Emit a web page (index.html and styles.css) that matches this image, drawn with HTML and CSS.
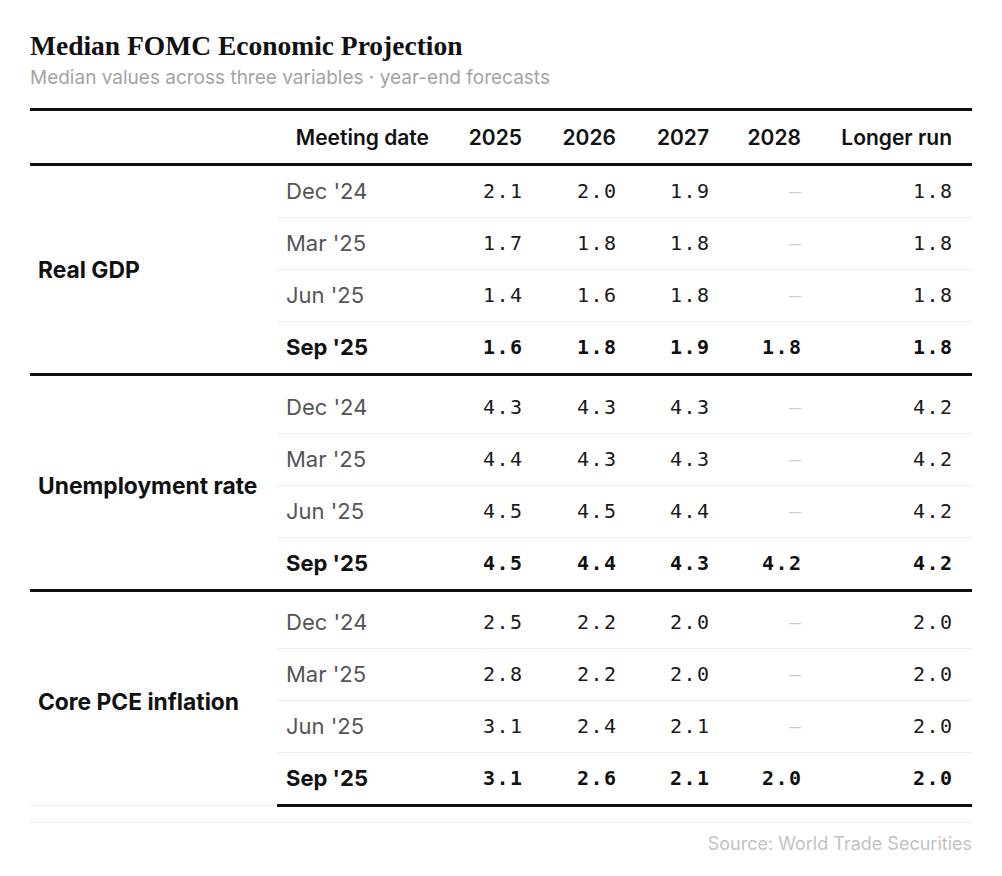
FILE: index.html
```html
<!DOCTYPE html>
<html lang="en">
<head>
<meta charset="utf-8">
<title>Median FOMC Economic Projection</title>
<link rel="stylesheet" href="styles.css">
</head>
<body>
<div class="page">
  <h1 class="title">Median FOMC Economic Projection</h1>
  <p class="subtitle">Median values across three variables · year-end forecasts</p>
  <table class="proj">
    <colgroup>
      <col class="c-var"><col class="c-date"><col class="c-y"><col class="c-y2"><col class="c-y"><col class="c-y3"><col class="c-lr">
    </colgroup>
    <thead>
      <tr>
        <th class="h-var"></th>
        <th class="h-date">Meeting date</th>
        <th>2025</th><th>2026</th><th>2027</th><th>2028</th><th>Longer run</th>
      </tr>
    </thead>
    <tbody class="grp">
      <tr class="first">
        <td class="var" rowspan="4">Real GDP</td>
        <td class="date">Dec '24</td><td class="num">2.1</td><td class="num">2.0</td><td class="num">1.9</td><td class="num na">—</td><td class="num">1.8</td>
      </tr>
      <tr><td class="date">Mar '25</td><td class="num">1.7</td><td class="num">1.8</td><td class="num">1.8</td><td class="num na">—</td><td class="num">1.8</td></tr>
      <tr><td class="date">Jun '25</td><td class="num">1.4</td><td class="num">1.6</td><td class="num">1.8</td><td class="num na">—</td><td class="num">1.8</td></tr>
      <tr class="latest"><td class="date">Sep '25</td><td class="num">1.6</td><td class="num">1.8</td><td class="num">1.9</td><td class="num">1.8</td><td class="num">1.8</td></tr>
    </tbody>
    <tbody class="grp">
      <tr class="first gap">
        <td class="var" rowspan="4">Unemployment rate</td>
        <td class="date">Dec '24</td><td class="num">4.3</td><td class="num">4.3</td><td class="num">4.3</td><td class="num na">—</td><td class="num">4.2</td>
      </tr>
      <tr><td class="date">Mar '25</td><td class="num">4.4</td><td class="num">4.3</td><td class="num">4.3</td><td class="num na">—</td><td class="num">4.2</td></tr>
      <tr><td class="date">Jun '25</td><td class="num">4.5</td><td class="num">4.5</td><td class="num">4.4</td><td class="num na">—</td><td class="num">4.2</td></tr>
      <tr class="latest"><td class="date">Sep '25</td><td class="num">4.5</td><td class="num">4.4</td><td class="num">4.3</td><td class="num">4.2</td><td class="num">4.2</td></tr>
    </tbody>
    <tbody class="grp last">
      <tr class="first gap">
        <td class="var" rowspan="4">Core PCE inflation</td>
        <td class="date">Dec '24</td><td class="num">2.5</td><td class="num">2.2</td><td class="num">2.0</td><td class="num na">—</td><td class="num">2.0</td>
      </tr>
      <tr><td class="date">Mar '25</td><td class="num">2.8</td><td class="num">2.2</td><td class="num">2.0</td><td class="num na">—</td><td class="num">2.0</td></tr>
      <tr><td class="date">Jun '25</td><td class="num">3.1</td><td class="num">2.4</td><td class="num">2.1</td><td class="num na">—</td><td class="num">2.0</td></tr>
      <tr class="latest"><td class="date">Sep '25</td><td class="num">3.1</td><td class="num">2.6</td><td class="num">2.1</td><td class="num">2.0</td><td class="num">2.0</td></tr>
    </tbody>
  </table>
  <div class="footer">Source: World Trade Securities</div>
</div>
</body>
</html>
```

FILE: styles.css
```css
html, body {
  margin: 0;
  padding: 0;
  background: #ffffff;
}

.page {
  padding: 30px 30px 0 30px;
  font-family: Inter, "Noto Sans", sans-serif;
  color: #111111;
}

.title {
  margin: 0;
  font-family: "Liberation Serif", "Times New Roman", serif;
  font-weight: 700;
  font-size: 27.5px;
  line-height: 32px;
  color: #111111;
}

.subtitle {
  margin: 5px 0 0 0;
  font-size: 19px;
  line-height: 22px;
  color: #a3a3a3;
}

.proj {
  margin-top: 19px;
  width: 942px;
  border-collapse: collapse;
  table-layout: fixed;
}

.c-var { width: 247px; }
.c-date { width: 172px; }
.c-y { width: 93px; }
.c-y2 { width: 94px; }
.c-y3 { width: 92px; }
.c-lr { width: 151px; }

.proj th {
  border-top: 3px solid #111111;
  border-bottom: 3px solid #111111;
  padding: 14px 20px 12px 0;
  font-size: 21px;
  line-height: 26px;
  font-weight: 600;
  text-align: right;
  color: #111111;
}

.proj td {
  padding: 13px 20px 13px 9px;
  font-size: 22px;
  line-height: 25px;
  border-bottom: 1px solid #ececec;
  vertical-align: middle;
}

.proj tr.gap td {
  padding-top: 19px;
}

.proj tbody.last tr.gap td {
  padding-top: 18px;
}

.proj td.var {
  padding-left: 8px;
  padding-right: 0;
  white-space: nowrap;
  font-size: 22.8px;
  font-weight: 700;
  color: #111111;
  text-align: left;
}

.proj td.date {
  text-align: left;
  color: #555555;
}

.proj td.num {
  text-align: right;
  font-family: "DejaVu Sans Mono", "Liberation Mono", monospace;
  font-size: 20px;
  letter-spacing: 1.5px;
  padding-right: 18.5px;
  color: #1a1a1a;
}

.proj td.na {
  color: #cccccc;
}

.proj tr.latest td {
  font-weight: 700;
  color: #111111;
}

.proj tbody.grp tr.latest td,
.proj tbody.grp td.var {
  border-bottom: 3px solid #111111;
}

.proj tbody.last td.var {
  border-bottom: 1px solid #ececec;
}

.footer {
  margin-top: 15px;
  border-top: 1px solid #eeeeee;
  padding-top: 10px;
  font-size: 18px;
  line-height: 22px;
  text-align: right;
  color: #c2c2c2;
}
```
